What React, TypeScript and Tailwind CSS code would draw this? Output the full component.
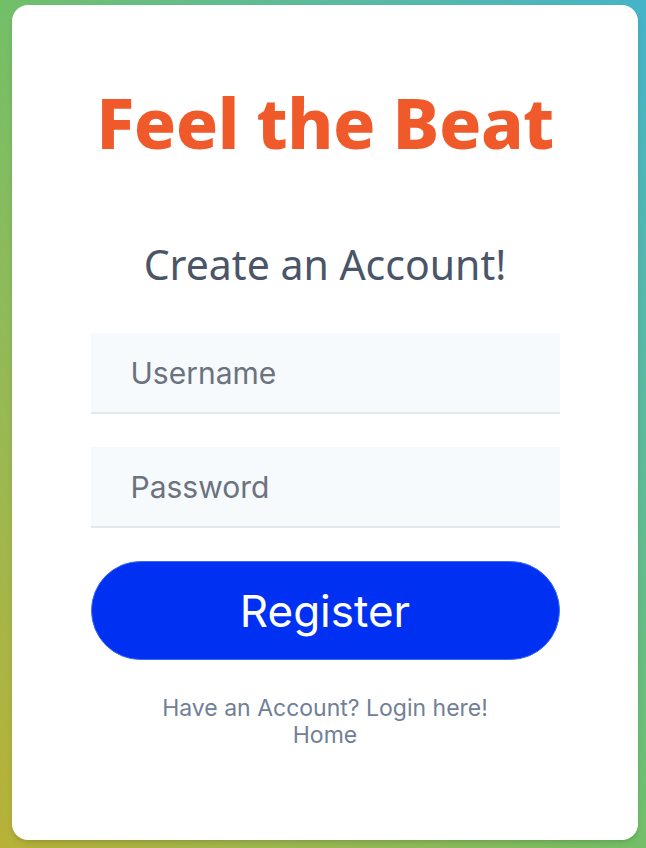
export default function App() {
  return (
    <div className="min-h-[848px] bg-gradient-to-tr from-[#b8b136] via-[#72bf68] to-[#45b3c9] pl-3 pr-2 pt-[5px] pb-2">
      <div className="flex h-[835px] flex-col items-center rounded-2xl bg-white shadow-md">
        <h1 className="mt-[82px] text-[70px] font-extrabold leading-[1] tracking-[-0.5px] text-[#f05a2b] [font-family:'Noto_Sans',Lato,sans-serif]">
          Feel the Beat
        </h1>
        <h2 className="mt-[87px] text-[41px] leading-[1] text-[#4a5568] [font-family:'Noto_Sans',Lato,sans-serif]">
          Create an Account!
        </h2>
        <form className="mt-[48px] flex w-[469px] flex-col [font-family:Inter,'Liberation_Sans',sans-serif]">
          <input
            type="text"
            placeholder="Username"
            className="h-[81px] border-b-2 border-[#e2e8f0] bg-[#f7fafc] px-10 text-[30px] text-[#4a5568] placeholder:text-[#6b7280] focus:outline-none"
          />
          <input
            type="password"
            placeholder="Password"
            className="mt-[33px] h-[81px] border-b-2 border-[#e2e8f0] bg-[#f7fafc] px-10 text-[30px] text-[#4a5568] placeholder:text-[#6b7280] focus:outline-none"
          />
          <button
            type="button"
            className="mt-[33px] h-[99px] rounded-full border border-[#3a6cf2] bg-[#0031f2] text-[44px] text-white"
          >
            Register
          </button>
        </form>
        <div className="mt-[35px] flex flex-col items-center text-[23px] leading-[27px] text-[#718096] [font-family:Inter,'Liberation_Sans',sans-serif]">
          <a href="#">Have an Account? Login here!</a>
          <a href="#">Home</a>
        </div>
      </div>
    </div>
  );
}
